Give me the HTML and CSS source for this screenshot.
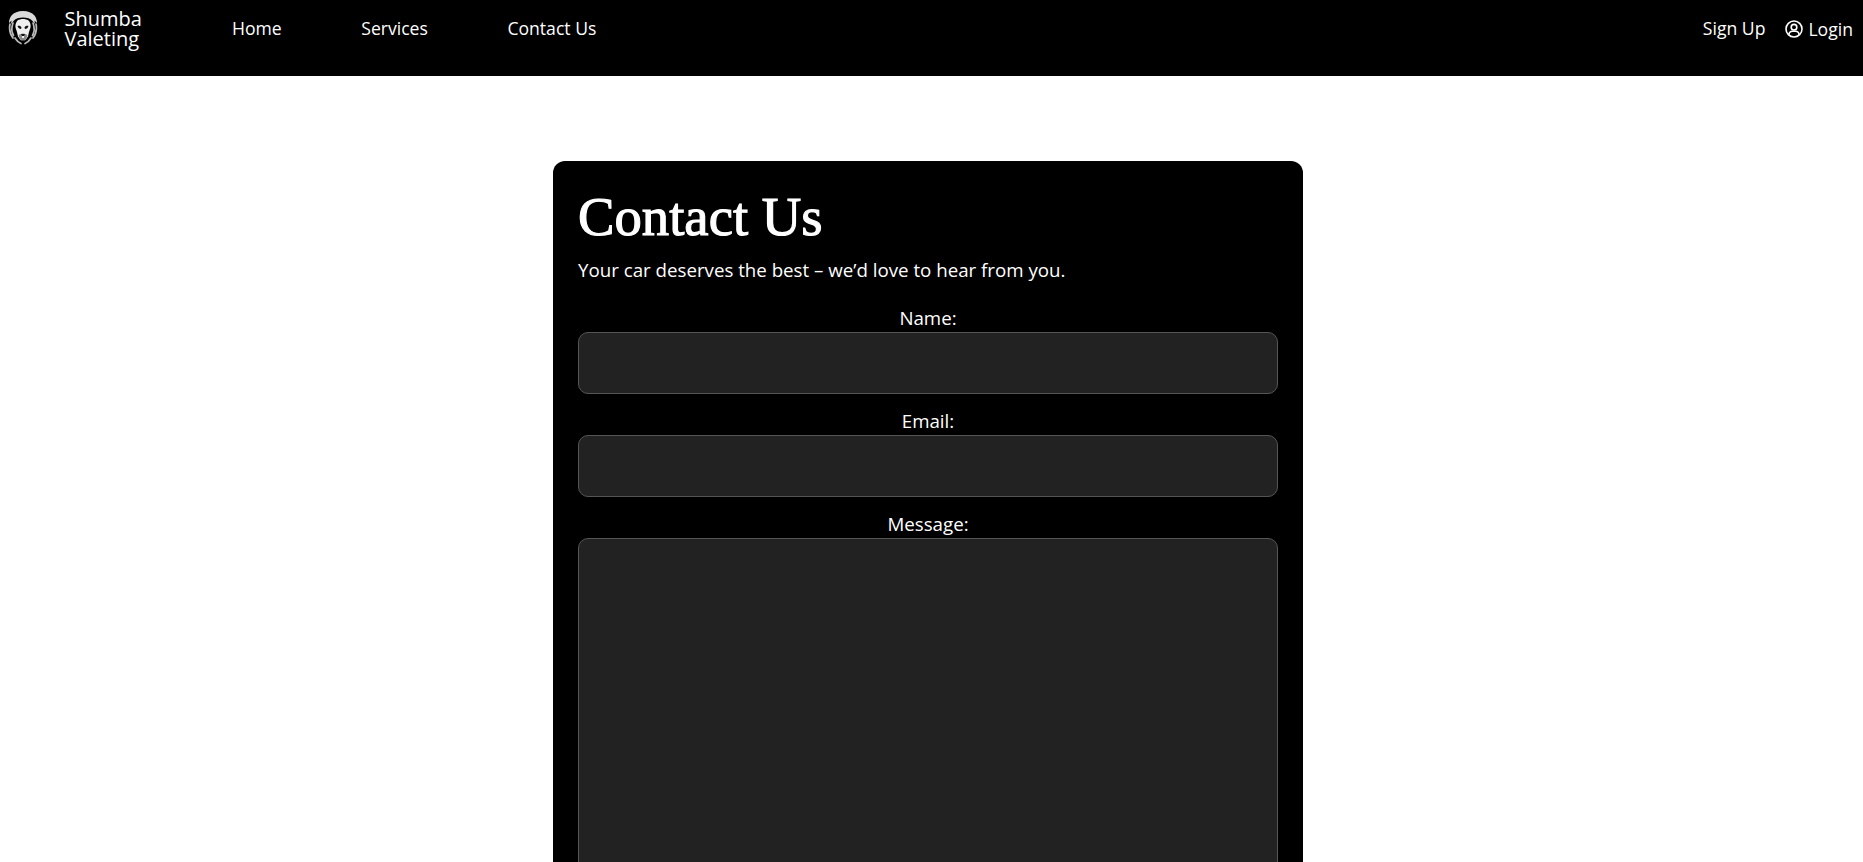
FILE: index.html
```html
<!DOCTYPE html>
<html lang="en">
<head>
<meta charset="utf-8">
<title>Contact Us - Shumba Valeting</title>
<link rel="stylesheet" href="styles.css">
</head>
<body>
<header class="topbar">
  <a class="brand" href="#">
    <svg class="logo" viewBox="0 0 30 34" aria-hidden="true">
      <path fill="#d9d9d9" d="M15 0C10 0 6 1.500 3.500 4.500 2 6.500 1 9 1 12l2.500-2.500L3 13l3-3.500C7.500 7.500 11 6.500 15 6.500s7.500 1 9 3l3 3.500-.5-3.500L29 12c0-3-1-5.500-2.500-7.500C24 1.500 20 0 15 0z"/>
      <g fill="none" stroke="#bbb" stroke-width="1.700" stroke-linecap="round">
        <path d="M2 13c-1 5 0 10 3 14"/>
        <path d="M5 12c-1.500 4-1.500 9 .5 12.500"/>
        <path d="M28 13c1 5 0 10-3 14"/>
        <path d="M25 12c1.500 4 1.500 9-.5 12.500"/>
        <path d="M7 27c1.500 2.500 3.500 4.500 6 5.500"/>
        <path d="M23 27c-1.500 2.500-3.500 4.500-6 5.500"/>
      </g>
      <path fill="#efefef" d="M9.500 9.500C11 8.500 13 8 15 8s4 .5 5.500 1.500c1.500 1.500 2.500 4 2 7L21 21l-1 4.500-2.500 3.500h-5L10 25.500 9 21l-1.500-4.500c-.5-3 .5-5 2-7z"/>
      <path fill="#8a8a8a" d="M10.500 24c1.500-1 3-1.500 4.500-1.500s3 .5 4.500 1.500l-1 3.500-1.500 2h-4l-1.500-2z"/>
      <path fill="#111" d="M9.500 15c1.500-.5 3.500 0 4 1.500l-.5 1.500c-1.500 0-3-1-3.500-3zM20.500 15c-1.500-.5-3.500 0-4 1.500l.5 1.500c1.500 0 3-1 3.500-3zM13 23h4l-1 2h-2z"/>
      <path fill="#f2f2f2" d="M14 25h2v2h-2z"/>
    </svg>
    <span class="brand-name">Shumba<br>Valeting</span>
  </a>
  <nav class="nav-main">
    <a href="#">Home</a>
    <a href="#">Services</a>
    <a href="#">Contact Us</a>
  </nav>
  <nav class="nav-user">
    <a href="#">Sign Up</a>
    <a class="login" href="#">
      <svg class="user-icon" viewBox="0 0 18 18" fill="none" stroke="currentColor" stroke-width="1.600" aria-hidden="true">
        <circle cx="9" cy="9" r="8"/>
        <circle cx="9" cy="7.200" r="2.800"/>
        <path d="M3.800 15c.2-2.400 1.800-3.800 3.700-3.800h3c1.900 0 3.500 1.400 3.700 3.800"/>
      </svg>
      Login
    </a>
  </nav>
</header>
<main class="page">
  <section class="card">
    <h1>Contact Us</h1>
    <p class="lead">Your car deserves the best – we’d love to hear from you.</p>
    <form class="form">
      <label for="name">Name:</label>
      <input id="name" type="text">
      <label for="email">Email:</label>
      <input id="email" type="email">
      <label for="message">Message:</label>
      <textarea id="message"></textarea>
    </form>
  </section>
</main>
</body>
</html>
```
FILE: styles.css
```css
* { box-sizing: border-box; }
html, body { height: 862px; overflow: hidden; }
body { margin: 0; background: #fff; color: #fff; font-family: "Open Sans", sans-serif; }
a { color: inherit; text-decoration: none; }
.topbar { display: flex; align-items: flex-start; height: 76px; background: #000; padding-left: 8px; padding-right: 10px; font-size: 17.6px; }
.brand { display: flex; align-items: flex-start; width: 224px; padding-top: 9px; }
.logo { width: 30px; height: 34px; margin-top: 2px; }
.brand-name { margin-left: 26.5px; font-size: 20px; line-height: 20px; }
.nav-main { display: flex; gap: 79.5px; padding-top: 16px; }
.nav-user { display: flex; gap: 20px; margin-left: auto; padding-top: 16px; }
.login { display: flex; align-items: center; gap: 5px; height: 25px; }
.user-icon { width: 18px; height: 18px; }
.page { padding: 85px 7px 0 0; display: flex; justify-content: center; }
.card { width: 750px; height: 800px; background: #000; border-radius: 12px; padding: 24px 24px 24px 25px; flex: none; }
h1 { margin: 0; font-family: "Liberation Serif", serif; font-size: 54.7px; line-height: 64px; font-weight: 400; -webkit-text-stroke: 1.1px #fff; }
.lead { margin: 8px 0 0; font-size: 18.72px; line-height: 26px; }
.form { display: flex; flex-direction: column; margin-top: 23px; width: 700px; }
label { text-align: center; font-size: 18.72px; line-height: 24px; display: block; margin-bottom: 2px; }
input, textarea { display: block; width: 100%; background: #222; border: 1px solid #555; border-radius: 10px; color: #fff; }
input { height: 62px; margin-bottom: 15px; }
textarea { height: 334px; }
```
